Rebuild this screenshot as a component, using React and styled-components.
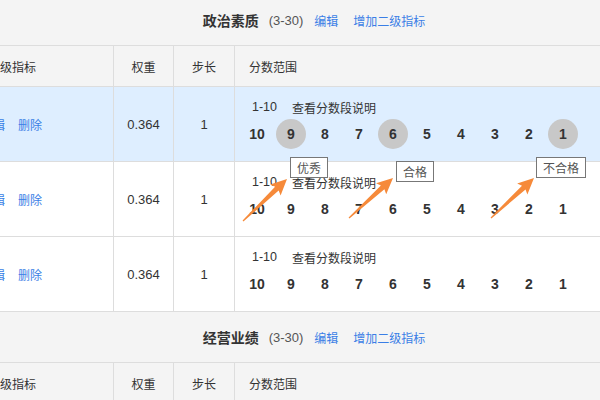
import React from "react"
import styled, { createGlobalStyle } from "styled-components"

const GlobalStyle = createGlobalStyle`
  html, body {
    margin: 0;
    padding: 0;
    background: #fff;
    overflow: hidden;
  }

  body {
    font-family: "Liberation Sans", "Noto Sans CJK SC", sans-serif;
    font-size: 12px;
    color: #333;
  }
`

const Viewport = styled.div`
  position: relative;
  width: 600px;
  height: 400px;
  overflow: hidden;
`

const Sheet = styled.div`
  width: 646px;
  margin: -5px 0 0 -46px;
`

const SectionTitle = styled.div`
  display: flex;
  align-items: center;
  justify-content: center;
  height: 50px;
  padding-left: 74px;
  background: #f4f4f4;
  border-bottom: 1px solid #ddd;
`

const TitleName = styled.span`
  font-family: "Noto Sans CJK SC", sans-serif;
  font-size: 14px;
  font-weight: 700;
  color: #333;
`

const TitleRange = styled.span`
  margin-left: 10px;
  font-size: 13px;
  color: #555;
`

const TextLink = styled.a`
  margin-left: ${({ gap }) => gap || 10}px;
  font-family: "Noto Sans CJK SC", sans-serif;
  font-size: 12px;
  color: #3a7ee6;
  cursor: pointer;
`

const Row = styled.div`
  display: grid;
  grid-template-columns: 160px 60px 61px 1fr;
  height: ${({ head }) => (head ? 40 : 74)}px;
  background: ${({ head, active }) =>
    head ? "#f4f4f4" : active ? "#deeeff" : "#fff"};
  border-bottom: 1px solid #ddd;
`

const Cell = styled.div`
  display: flex;
  align-items: center;
  justify-content: ${({ center }) => (center ? "center" : "flex-start")};
  padding-left: ${({ pad }) => pad || 0}px;
  border-right: ${({ last }) => (last ? "none" : "1px solid #ddd")};
  font-family: "Noto Sans CJK SC", sans-serif;
  font-size: 12px;
  color: #333;
  box-sizing: border-box;
`

const Num = styled.span`
  font-family: "Liberation Sans", sans-serif;
  font-size: 13px;
  color: #333;
`

const ScoreCell = styled.div`
  display: flex;
  flex-direction: column;
  padding: 11px 0 0 7px;
`

const RangeLine = styled.div`
  display: flex;
  align-items: center;
  height: 18px;
  padding-left: 10px;
  gap: 15px;
  font-size: 12px;
  color: #333;
`

const RangeNum = styled.span`
  font-family: "Liberation Sans", sans-serif;
  font-size: 12.5px;
`

const RangeLink = styled.span`
  font-family: "Noto Sans CJK SC", sans-serif;
  font-size: 12px;
`

const Scale = styled.div`
  display: flex;
  gap: 4px;
  margin-top: 3px;
`

const ScaleItem = styled.span`
  display: flex;
  align-items: center;
  justify-content: center;
  width: 30px;
  height: 30px;
  border-radius: 50%;
  background: ${({ marked }) => (marked ? "#c8c8c8" : "transparent")};
  font-family: "Liberation Sans", sans-serif;
  font-size: 14px;
  font-weight: 700;
  color: #333;
`

const Overlay = styled.svg`
  position: absolute;
  left: 0;
  top: 0;
  width: 600px;
  height: 400px;
  pointer-events: none;
`

const Tag = styled.div`
  position: absolute;
  left: ${({ x }) => x}px;
  top: ${({ y }) => y}px;
  height: 19px;
  padding: 0 6px;
  display: flex;
  align-items: center;
  background: #fff;
  border: 1px solid #777;
  font-family: "Noto Sans CJK SC", sans-serif;
  font-size: 12px;
  color: #555;
`

const scale = [10, 9, 8, 7, 6, 5, 4, 3, 2, 1]

const HeadRow = () => (
  <Row head>
    <Cell pad={34}>二级指标</Cell>
    <Cell center>权重</Cell>
    <Cell center>步长</Cell>
    <Cell pad={14} last>分数范围</Cell>
  </Row>
)

const IndicatorRow = ({ active, marked = [] }) => (
  <Row active={active}>
    <Cell pad={17}>
      <TextLink gap={0}>编辑</TextLink>
      <TextLink gap={13}>删除</TextLink>
    </Cell>
    <Cell center>
      <Num>0.364</Num>
    </Cell>
    <Cell center>
      <Num>1</Num>
    </Cell>
    <ScoreCell>
      <RangeLine>
        <RangeNum>1-10</RangeNum>
        <RangeLink>查看分数段说明</RangeLink>
      </RangeLine>
      <Scale>
        {scale.map((n) => (
          <ScaleItem key={n} marked={marked.includes(n)}>
            {n}
          </ScaleItem>
        ))}
      </Scale>
    </ScoreCell>
  </Row>
)

const Section = ({ name, children }) => (
  <>
    <SectionTitle>
      <TitleName>{name}</TitleName>
      <TitleRange>(3-30)</TitleRange>
      <TextLink gap={11}>编辑</TextLink>
      <TextLink gap={15}>增加二级指标</TextLink>
    </SectionTitle>
    <HeadRow />
    {children}
  </>
)

const Arrow = ({ from, to }) => {
  const dx = to[0] - from[0]
  const dy = to[1] - from[1]
  const len = Math.hypot(dx, dy)
  const angle = (Math.atan2(dy, dx) * 180) / Math.PI
  const h = len - 16
  return (
    <polygon
      transform={`translate(${from[0]} ${from[1]}) rotate(${angle})`}
      points={`0,-0.6 ${h + 2},-2.6 ${h},-7.5 ${len},0 ${h},7.5 ${h + 2},2.6 0,0.6`}
      fill="#f68a3a"
    />
  )
}

export default function App() {
  return (
    <Viewport>
      <GlobalStyle />
      <Sheet>
        <Section name="政治素质">
          <IndicatorRow active marked={[9, 6, 1]} />
          <IndicatorRow />
          <IndicatorRow />
        </Section>
        <Section name="经营业绩" />
      </Sheet>
      <Overlay viewBox="0 0 600 400">
        <Arrow from={[243, 221]} to={[287, 179]} />
        <Arrow from={[349, 218]} to={[393, 178]} />
        <Arrow from={[491, 218]} to={[534, 178]} />
      </Overlay>
      <Tag x={290} y={157}>优秀</Tag>
      <Tag x={396} y={161}>合格</Tag>
      <Tag x={536} y={157}>不合格</Tag>
    </Viewport>
  )
}
